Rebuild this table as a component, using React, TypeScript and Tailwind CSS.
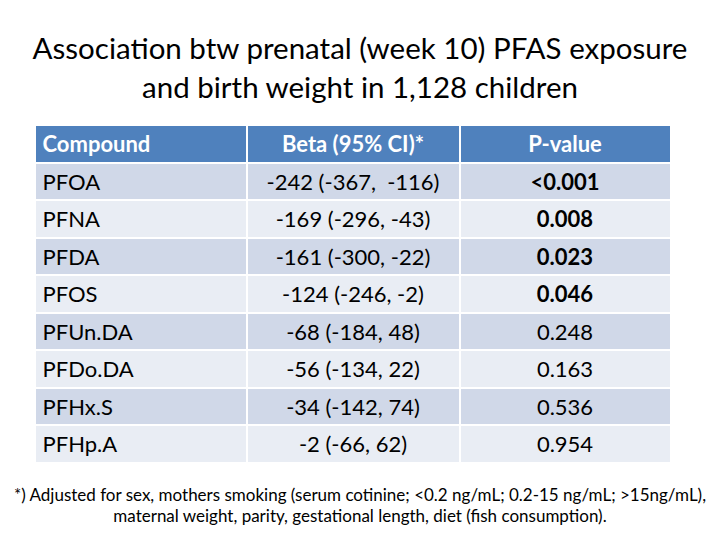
import React from 'react'

const rows: { name: string; beta: string; p: string; bold?: boolean }[] = [
  { name: 'PFOA', beta: '-242 (-367,  -116)', p: '<0.001', bold: true },
  { name: 'PFNA', beta: '-169 (-296, -43)', p: '0.008', bold: true },
  { name: 'PFDA', beta: '-161 (-300, -22)', p: '0.023', bold: true },
  { name: 'PFOS', beta: '-124 (-246, -2)', p: '0.046', bold: true },
  { name: 'PFUn.DA', beta: '-68 (-184, 48)', p: '0.248' },
  { name: 'PFDo.DA', beta: '-56 (-134, 22)', p: '0.163' },
  { name: 'PFHx.S', beta: '-34 (-142, 74)', p: '0.536' },
  { name: 'PFHp.A', beta: '-2 (-66, 62)', p: '0.954' },
]

export default function App() {
  return (
    <div className="w-[720px] h-[540px] bg-white text-black flex flex-col items-center font-['Lato',sans-serif]">
      {/* Title */}
      <h1 className="mt-[28px] text-center text-[29.5px] leading-[39px] font-normal whitespace-nowrap">
        Association btw prenatal (week 10) PFAS exposure
        <br />
        and birth weight in 1,128 children
      </h1>

      {/* Table */}
      <div className="mt-[20px] ml-[-15px] grid grid-cols-[210px_211px_209px] gap-x-[2px] gap-y-[2px] text-[22px]">
        <div className="h-[35.5px] bg-[#4f81bd] text-white font-bold flex items-center px-[7px]">Compound</div>
        <div className="h-[35.5px] bg-[#4f81bd] text-white font-bold flex items-center justify-center">Beta (95% CI)*</div>
        <div className="h-[35.5px] bg-[#4f81bd] text-white font-bold flex items-center justify-center">P-value</div>
        {rows.map((r, i) => {
          const bg = i % 2 === 0 ? 'bg-[#d0d8e8]' : 'bg-[#e9edf4]'
          return (
            <React.Fragment key={r.name}>
              <div className={`h-[35.5px] ${bg} flex items-center px-[7px]`}>{r.name}</div>
              <div className={`h-[35.5px] ${bg} flex items-center justify-center whitespace-pre`}>{r.beta}</div>
              <div className={`h-[35.5px] ${bg} flex items-center justify-center ${r.bold ? 'font-bold' : ''}`}>{r.p}</div>
            </React.Fragment>
          )
        })}
      </div>

      {/* Footnote */}
      <p className="mt-[22px] text-center text-[17px] leading-[21px] whitespace-nowrap">
        *) Adjusted for sex, mothers smoking (serum cotinine; &lt;0.2 ng/mL; 0.2-15 ng/mL; &gt;15ng/mL),
        <br />
        maternal weight, parity, gestational length, diet (fish consumption).
      </p>
    </div>
  )
}
